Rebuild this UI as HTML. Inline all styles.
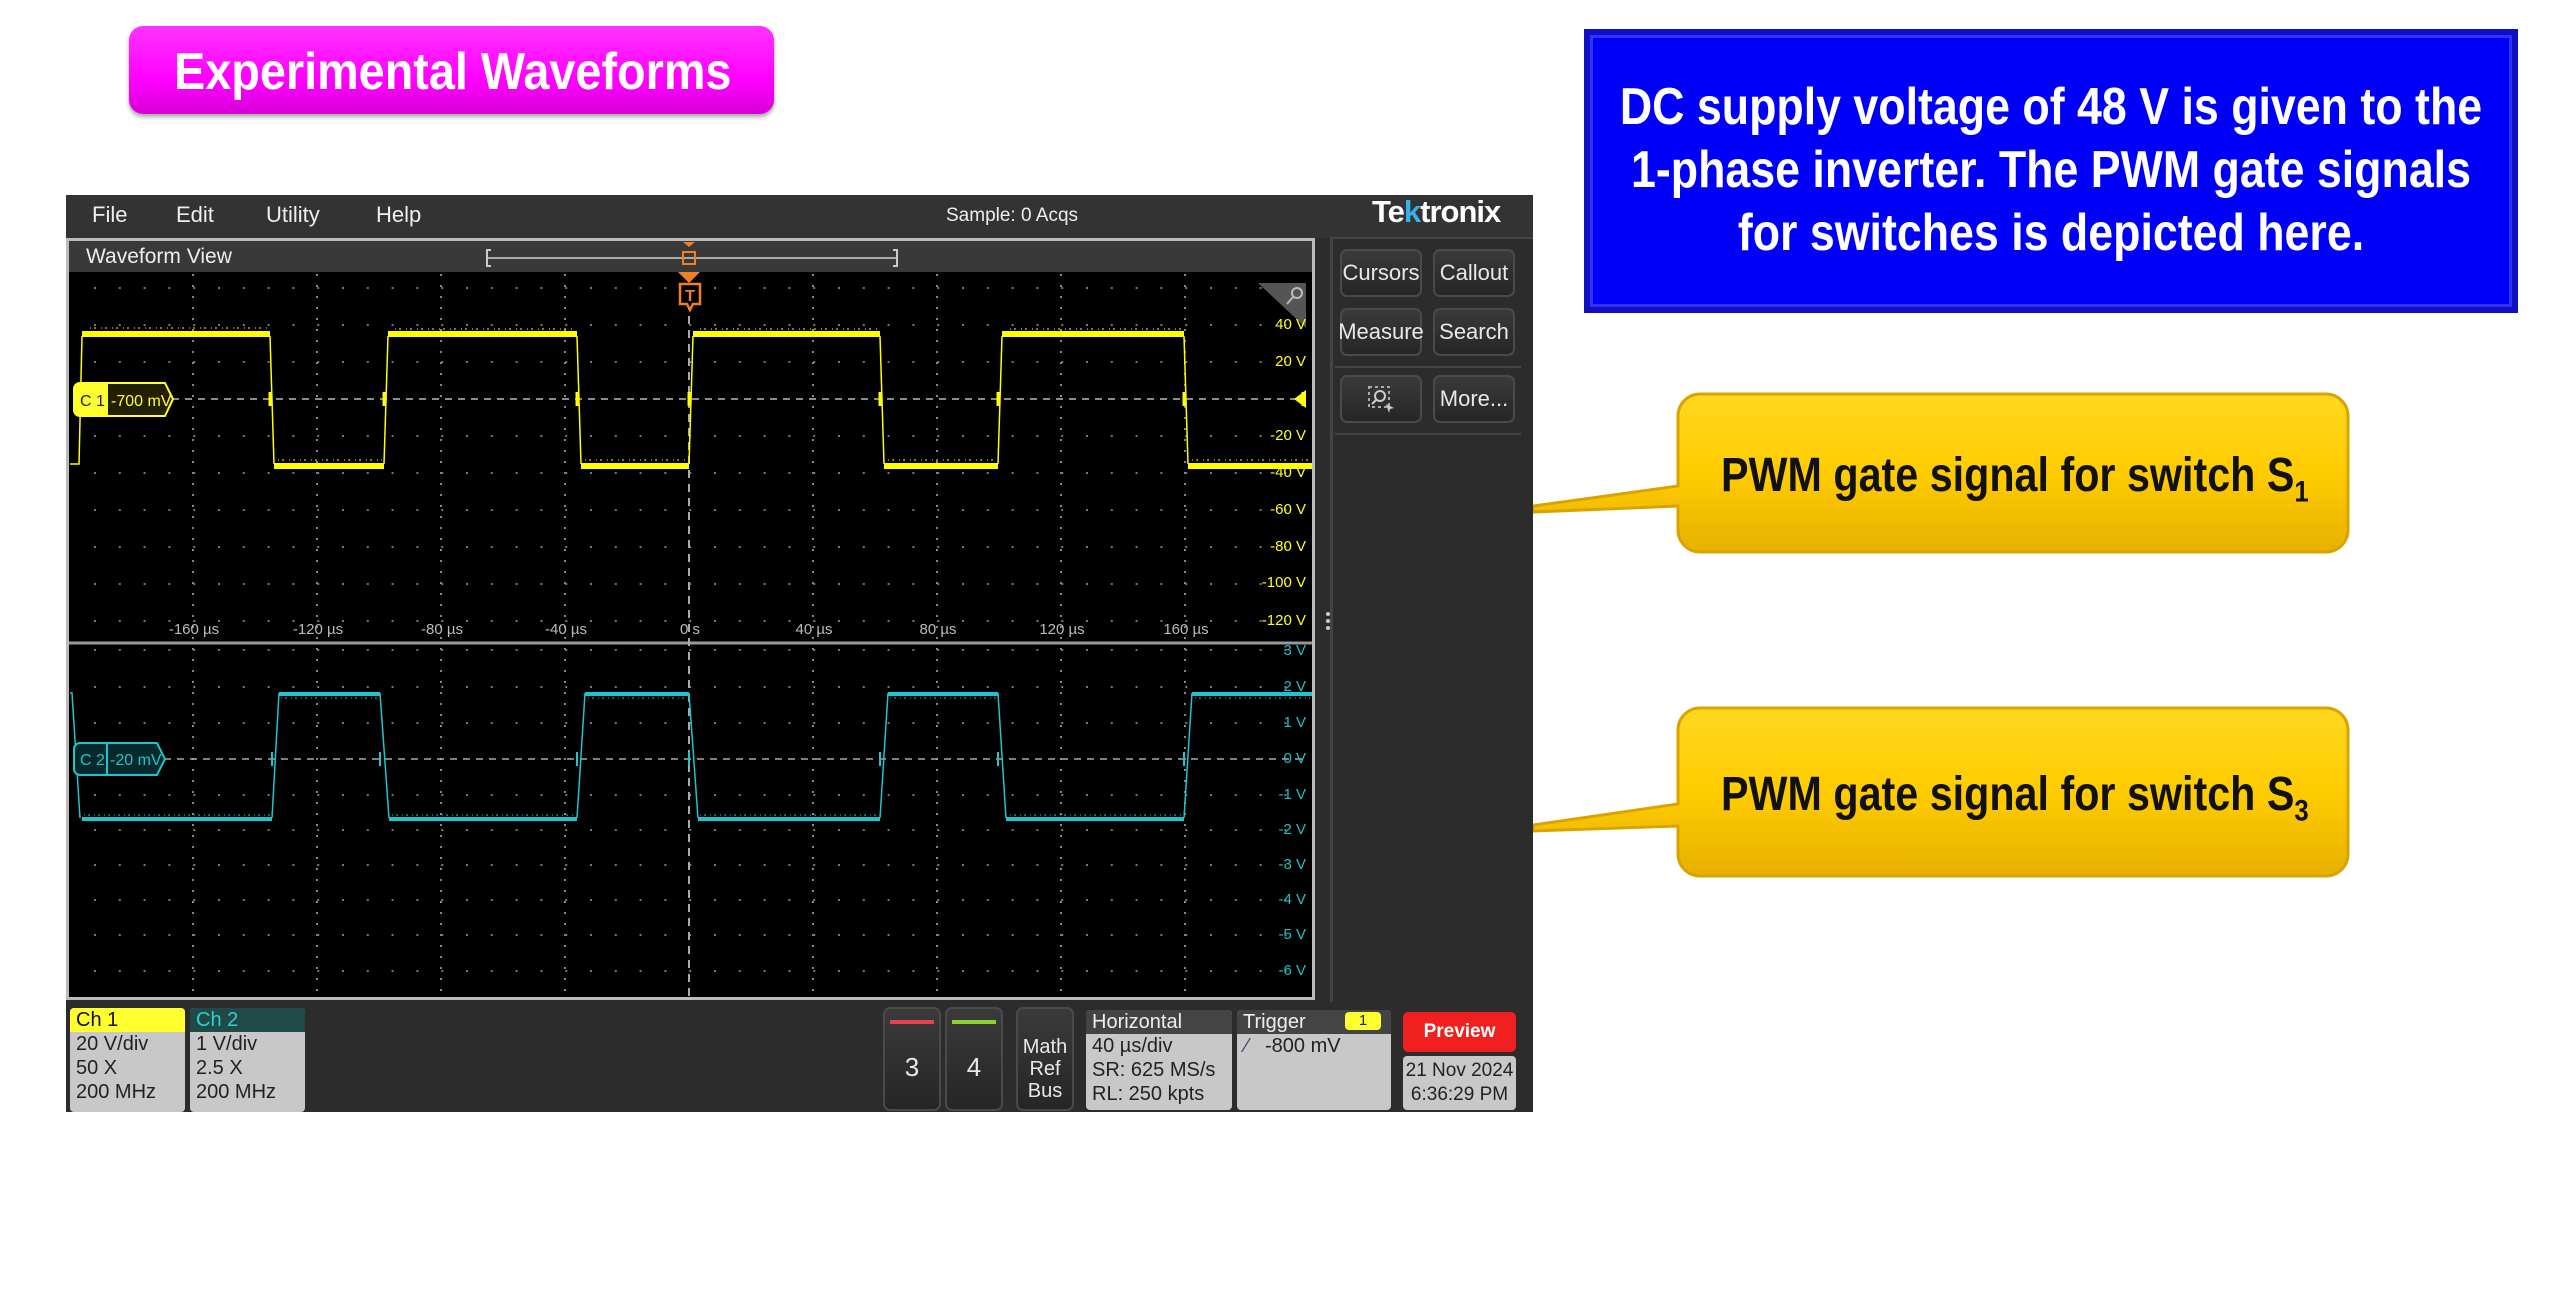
<!DOCTYPE html>
<html><head><meta charset="utf-8"><style>
*{margin:0;padding:0;box-sizing:border-box}
body{width:2558px;height:1303px;background:#fff;position:relative;overflow:hidden;font-family:"Liberation Sans",sans-serif}
.a{position:absolute}
.t{white-space:nowrap;transform-origin:left center}
.bl{position:absolute;left:1051px;width:2000px;text-align:center;color:#fff;font-weight:bold;font-size:52px;line-height:63px;white-space:nowrap;transform:scaleX(.86);transform-origin:center}
.btn{position:absolute;background:linear-gradient(#3a3a3a,#262626);border:2px solid #4a4a4a;border-radius:7px;color:#e8e8e8;font-size:22px;display:flex;align-items:center;justify-content:center}
.lbl{position:absolute;font-size:15px;color:#ffff20;text-align:right;width:60px}
.lb2{position:absolute;font-size:15px;color:#20c0c8;text-align:right;width:60px}
.tl{position:absolute;font-size:15px;color:#bbb;top:621px;width:80px;text-align:center}
.box{position:absolute;background:#c8c8c8;color:#222;font-size:20px;line-height:24px;border-radius:4px;overflow:hidden}
</style></head><body>

<div class="a" style="left:129px;top:26px;width:645px;height:88px;border-radius:14px;background:linear-gradient(#ff33ff,#ff00ff 60%,#d800d8);box-shadow:0 3px 4px rgba(0,0,0,.35)"></div>
<div class="a t" style="left:174px;top:42px;font-size:52px;font-weight:bold;color:#fff;transform:scaleX(.9)">Experimental Waveforms</div>

<div class="a" style="left:1584px;top:29px;width:934px;height:284px;background:#0000f8;border:6px solid #1010c0;box-shadow:inset 0 0 0 3px #3030ff"></div>
<div class="bl" style="top:76px">DC supply voltage of 48 V is given to the</div>
<div class="bl" style="top:139px">1-phase inverter. The PWM gate signals</div>
<div class="bl" style="top:202px">for switches is depicted here.</div>

<svg class="a" style="left:1520px;top:380px" width="860" height="520">
<defs><linearGradient id="g" x1="0" y1="0" x2="0" y2="1"><stop offset="0" stop-color="#ffd820"/><stop offset=".5" stop-color="#ffcc00"/><stop offset="1" stop-color="#e8b000"/></linearGradient></defs>
<path d="M180,14 h626 a22,22 0 0 1 22,22 v114 a22,22 0 0 1 -22,22 h-626 a22,22 0 0 1 -22,-22 v-24 L13,132 L13,126 L158,106 v-70 a22,22 0 0 1 22,-22z" fill="url(#g)" stroke="#d9a400" stroke-width="3"/>
<path d="M180,328 h626 a22,22 0 0 1 22,22 v124 a22,22 0 0 1 -22,22 h-626 a22,22 0 0 1 -22,-22 v-28 L13,451 L13,445 L158,424 v-74 a22,22 0 0 1 22,-22z" fill="url(#g)" stroke="#d9a400" stroke-width="3"/>
</svg>
<div class="a t" style="left:1721px;top:448px;font-size:48px;font-weight:bold;color:#111;transform:scaleX(.86)">PWM gate signal for switch S<sub style="font-size:30px">1</sub></div>
<div class="a t" style="left:1721px;top:767px;font-size:48px;font-weight:bold;color:#111;transform:scaleX(.86)">PWM gate signal for switch S<sub style="font-size:30px">3</sub></div>

<div class="a" style="left:66px;top:195px;width:1467px;height:917px;background:#2c2c2c"></div>
<div class="a" style="left:66px;top:195px;width:1467px;height:43px;background:#333"></div>
<div class="a" style="left:92px;top:198px;font-size:22px;color:#eee;line-height:34px">File</div>
<div class="a" style="left:176px;top:198px;font-size:22px;color:#eee;line-height:34px">Edit</div>
<div class="a" style="left:266px;top:198px;font-size:22px;color:#eee;line-height:34px">Utility</div>
<div class="a" style="left:376px;top:198px;font-size:22px;color:#eee;line-height:34px">Help</div>
<div class="a" style="left:946px;top:199px;font-size:19px;color:#eee;line-height:34px">Sample: 0 Acqs</div>
<div class="a" style="left:1372px;top:194px;font-size:31px;font-weight:bold;color:#fff;letter-spacing:-1px;line-height:36px">Te<span style="color:#3ab0e8">k</span>tronix</div>

<div class="a" style="left:66px;top:238px;width:1249px;height:762px;border:3px solid #bbb;background:#000"></div>
<div class="a" style="left:69px;top:241px;width:1243px;height:31px;background:#393939"></div>
<div class="a" style="left:86px;top:242px;font-size:21px;color:#eee;line-height:30px">Waveform View</div>

<svg class="a" style="left:0;top:0" width="1540" height="1010">
<line x1="487" y1="258" x2="897" y2="258" stroke="#aaa" stroke-width="2"/>
<path d="M491,250 h-4 v16 h4 M893,250 h4 v16 h-4" stroke="#ccc" fill="none" stroke-width="2"/>
<path d="M683,242 h12 l-6,5z" fill="#f08020"/>
<rect x="683" y="252" width="12" height="12" fill="none" stroke="#f08020" stroke-width="2"/>
<g stroke="#888" stroke-width="2" stroke-dasharray="2 9">
<line x1="193" y1="274" x2="193" y2="997"/><line x1="317" y1="274" x2="317" y2="997"/><line x1="441" y1="274" x2="441" y2="997"/><line x1="565" y1="274" x2="565" y2="997"/><line x1="813" y1="274" x2="813" y2="997"/><line x1="937" y1="274" x2="937" y2="997"/><line x1="1061" y1="274" x2="1061" y2="997"/><line x1="1185" y1="274" x2="1185" y2="997"/>
</g>
<g stroke="#777" stroke-width="2" stroke-dasharray="2 22.8">
<line x1="94" y1="288" x2="1309" y2="288"/><line x1="94" y1="325" x2="1309" y2="325"/><line x1="94" y1="362" x2="1309" y2="362"/><line x1="94" y1="436" x2="1309" y2="436"/><line x1="94" y1="473" x2="1309" y2="473"/><line x1="94" y1="510" x2="1309" y2="510"/><line x1="94" y1="547" x2="1309" y2="547"/><line x1="94" y1="584" x2="1309" y2="584"/><line x1="94" y1="621" x2="1309" y2="621"/>
<line x1="94" y1="650" x2="1309" y2="650"/><line x1="94" y1="687" x2="1309" y2="687"/><line x1="94" y1="723" x2="1309" y2="723"/><line x1="94" y1="795" x2="1309" y2="795"/><line x1="94" y1="830" x2="1309" y2="830"/><line x1="94" y1="865" x2="1309" y2="865"/><line x1="94" y1="900" x2="1309" y2="900"/><line x1="94" y1="935" x2="1309" y2="935"/><line x1="94" y1="971" x2="1309" y2="971"/>
</g>
<line x1="69" y1="643" x2="1312" y2="643" stroke="#999" stroke-width="3"/>
<line x1="689" y1="274" x2="689" y2="997" stroke="#aaa" stroke-width="2" stroke-dasharray="8 6"/>
<line x1="172" y1="399" x2="1305" y2="399" stroke="#bbb" stroke-width="1.5" stroke-dasharray="7 6"/>
<line x1="164" y1="759" x2="1305" y2="759" stroke="#aaa" stroke-width="1.5" stroke-dasharray="7 6"/>
<path d="M678,272 h22 l-11,11z" fill="#f08020"/>
<path d="M680,284 h20 v20 h-7 l-3,6 l-3,-6 h-7z" fill="#000" stroke="#f08020" stroke-width="2.5"/>
<text x="690" y="301" fill="#f08020" font-size="16" font-family="Liberation Sans" text-anchor="middle" font-weight="bold">T</text>
<g fill="none" stroke="#ffff00">
<path stroke-width="1.5" d="M70,464 H79 L82,336 M270,336 L274,464 M384,464 L388,336 M577,336 L581,464 M689,464 L693,336 M880,336 L884,464 M998,464 L1002,336 M1184,336 L1188,464"/>
<path stroke-width="6" d="M82,334 H270 M388,334 H577 M693,334 H880 M1002,334 H1184 M274,466 H384 M581,466 H689 M884,466 H998 M1188,466 H1312"/>
<path stroke-width="1" stroke-dasharray="1 3 2 5" d="M90,328 H268 M395,329 H575 M700,329 H878 M1010,329 H1182 M278,460 H382 M585,460 H687 M888,460 H996 M1192,460 H1310"/>
<path stroke-width="3" d="M270,392 v14 M384,392 v14 M577,392 v14 M689,392 v14 M880,392 v14 M998,392 v14 M1184,392 v14 M1303,392 v14"/>
</g>
<path d="M1306,390 l-12,9 12,9z" fill="#ffff00"/>
<g fill="none" stroke="#20c4cc">
<path stroke-width="1.5" d="M70,693 L72,693 L80,818 M272,818 L279,693 M380,693 L389,818 M577,818 L585,693 M689,693 L698,818 M880,818 L888,693 M998,693 L1006,818 M1184,818 L1192,693"/>
<path stroke-width="4" d="M82,819 H272 M389,819 H577 M698,819 H880 M1006,819 H1184 M279,694 H380 M585,694 H689 M888,694 H998 M1192,694 H1312"/>
<path stroke-width="1" stroke-dasharray="1 3 2 4" d="M84,815 H270 M392,815 H575 M700,815 H878 M1010,815 H1182 M281,698 H378 M588,698 H687 M890,698 H996 M1195,698 H1310"/>
<path stroke-width="2" d="M272,752 v14 M380,752 v14 M577,752 v14 M689,752 v14 M880,752 v14 M998,752 v14 M1184,752 v14"/>
</g>
<path d="M80,383 H165 L173,399 L165,416 H80 a6,6 0 0 1 -6,-6 v-21 a6,6 0 0 1 6,-6z" fill="#222000" stroke="#ffff30" stroke-width="2"/>
<path d="M80,383 H108 V416 H80 a6,6 0 0 1 -6,-6 v-21 a6,6 0 0 1 6,-6z" fill="#ffff30"/>
<text x="80" y="406" font-size="16" font-family="Liberation Sans" fill="#222">C 1</text>
<text x="111" y="406" font-size="16" font-family="Liberation Sans" fill="#ffff30">-700 mV</text>
<path d="M80,743 H157 L165,759 L157,775 H80 a6,6 0 0 1 -6,-6 v-20 a6,6 0 0 1 6,-6z" fill="#062a2c" stroke="#20c4cc" stroke-width="2"/>
<line x1="107" y1="743" x2="107" y2="775" stroke="#20c4cc" stroke-width="2"/>
<text x="80" y="765" font-size="16" font-family="Liberation Sans" fill="#20c4cc">C 2</text>
<text x="110" y="765" font-size="16" font-family="Liberation Sans" fill="#20c4cc">-20 mV</text>
<path d="M1258,283 H1306 V328z" fill="#555"/>
<circle cx="1297" cy="293" r="5" fill="none" stroke="#bbb" stroke-width="2"/><line x1="1293" y1="297" x2="1287" y2="304" stroke="#bbb" stroke-width="2"/>
<circle cx="1328" cy="614" r="2" fill="#ccc"/><circle cx="1328" cy="621" r="2" fill="#ccc"/><circle cx="1328" cy="628" r="2" fill="#ccc"/>
</svg>

<div class="lbl" style="left:1246px;top:316px">40 V</div>
<div class="lbl" style="left:1246px;top:353px">20 V</div>
<div class="lbl" style="left:1246px;top:427px">-20 V</div>
<div class="lbl" style="left:1246px;top:464px">-40 V</div>
<div class="lbl" style="left:1246px;top:501px">-60 V</div>
<div class="lbl" style="left:1246px;top:538px">-80 V</div>
<div class="lbl" style="left:1246px;top:574px">-100 V</div>
<div class="lbl" style="left:1246px;top:612px">-120 V</div>
<div class="lb2" style="left:1246px;top:642px">3 V</div>
<div class="lb2" style="left:1246px;top:678px">2 V</div>
<div class="lb2" style="left:1246px;top:714px">1 V</div>
<div class="lb2" style="left:1246px;top:750px">0 V</div>
<div class="lb2" style="left:1246px;top:786px">-1 V</div>
<div class="lb2" style="left:1246px;top:821px">-2 V</div>
<div class="lb2" style="left:1246px;top:856px">-3 V</div>
<div class="lb2" style="left:1246px;top:891px">-4 V</div>
<div class="lb2" style="left:1246px;top:926px">-5 V</div>
<div class="lb2" style="left:1246px;top:962px">-6 V</div>
<div class="tl" style="left:154px">-160 µs</div>
<div class="tl" style="left:278px">-120 µs</div>
<div class="tl" style="left:402px">-80 µs</div>
<div class="tl" style="left:526px">-40 µs</div>
<div class="tl" style="left:650px">0 s</div>
<div class="tl" style="left:774px">40 µs</div>
<div class="tl" style="left:898px">80 µs</div>
<div class="tl" style="left:1022px">120 µs</div>
<div class="tl" style="left:1146px">160 µs</div>

<div class="a" style="left:1330px;top:237px;width:3px;height:765px;background:#444"></div>
<div class="a" style="left:1333px;top:237px;width:200px;height:2px;background:#444"></div>
<div class="btn" style="left:1340px;top:249px;width:82px;height:48px">Cursors</div>
<div class="btn" style="left:1433px;top:249px;width:82px;height:48px">Callout</div>
<div class="btn" style="left:1340px;top:308px;width:82px;height:48px">Measure</div>
<div class="btn" style="left:1433px;top:308px;width:82px;height:48px">Search</div>
<div class="a" style="left:1335px;top:366px;width:186px;height:2px;background:#444"></div>
<div class="btn" style="left:1340px;top:375px;width:82px;height:48px"><svg width="30" height="30"><rect x="3" y="3" width="20" height="20" fill="none" stroke="#aaa" stroke-width="2" stroke-dasharray="3 3"/><circle cx="14" cy="12" r="5" fill="none" stroke="#ccc" stroke-width="2"/><path d="M10,16 l-4,4" stroke="#ccc" stroke-width="2"/><path d="M20,20 l8,4 -4,1 -1,4z" fill="#ccc"/></svg></div>
<div class="btn" style="left:1433px;top:375px;width:82px;height:48px">More...</div>
<div class="a" style="left:1335px;top:433px;width:186px;height:2px;background:#444"></div>

<div class="box" style="left:70px;top:1008px;width:115px;height:104px"><div style="background:#ffff30;color:#111;height:24px;padding-left:6px">Ch 1</div><div style="padding-left:6px">20 V/div<br>50 X<br>200 MHz</div></div>
<div class="box" style="left:190px;top:1008px;width:115px;height:104px"><div style="background:#1f4a48;color:#30d0d0;height:24px;padding-left:6px">Ch 2</div><div style="padding-left:6px">1 V/div<br>2.5 X<br>200 MHz</div></div>
<div class="btn" style="left:883px;top:1007px;width:58px;height:104px;font-size:26px;padding-top:16px">3</div>
<div class="a" style="left:890px;top:1020px;width:44px;height:4px;background:#e84050"></div>
<div class="btn" style="left:945px;top:1007px;width:58px;height:104px;font-size:26px;padding-top:16px">4</div>
<div class="a" style="left:952px;top:1020px;width:44px;height:4px;background:#90d030"></div>
<div class="btn" style="left:1016px;top:1007px;width:58px;height:104px;font-size:20px;line-height:22px;text-align:center;padding-top:20px">Math<br>Ref<br>Bus</div>
<div class="box" style="left:1086px;top:1010px;width:146px;height:100px"><div style="background:#444;color:#eee;height:24px;padding-left:6px">Horizontal</div><div style="padding-left:6px">40 µs/div<br>SR: 625 MS/s<br>RL: 250 kpts</div></div>
<div class="box" style="left:1237px;top:1010px;width:154px;height:100px"><div style="background:#444;color:#eee;height:24px;padding-left:6px">Trigger<span style="position:absolute;left:108px;top:2px;width:36px;height:18px;background:#ffff30;border-radius:4px;color:#222;font-size:15px;line-height:18px;text-align:center">1</span></div><div style="padding-left:8px"><span style="color:#446">⁄</span>&nbsp;&nbsp; -800 mV</div></div>
<div class="a" style="left:1403px;top:1012px;width:113px;height:40px;background:#f02020;border-radius:5px;color:#fff;font-weight:bold;font-size:19px;text-align:center;line-height:40px">Preview</div>
<div class="box" style="left:1403px;top:1056px;width:113px;height:54px;text-align:center;font-size:19px;line-height:24px;padding-top:3px">21 Nov 2024<br>6:36:29 PM</div>
</body></html>
